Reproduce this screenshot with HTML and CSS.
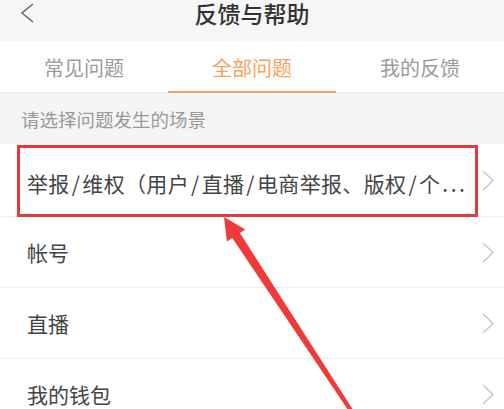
FILE: index.html
```html
<!DOCTYPE html>
<html lang="zh">
<head>
<meta charset="utf-8">
<link rel="stylesheet" href="styles.css">
</head>
<body>
<div class="page">
  <header class="topbar">
    <svg class="back" width="14" height="20" viewBox="0 0 14 20"><path d="M13 1 L2 10 L13 19" fill="none" stroke="#6a6a6a" stroke-width="1.6"/></svg>
    <div class="title">反馈与帮助</div>
  </header>
  <nav class="tabs">
    <div class="tab">常见问题</div>
    <div class="tab active">全部问题</div>
    <div class="tab">我的反馈</div>
  </nav>
  <div class="section">请选择问题发生的场景</div>
  <ul class="list">
    <li class="row"><span class="label long">举报<span class="sl">/</span>维权（用户<span class="sl">/</span>直播<span class="sl">/</span>电商举报、版权<span class="sl">/</span>个<span class="dots">...</span></span><svg class="chev" width="12" height="21" viewBox="0 0 12 21"><path d="M1 1 L11 10.5 L1 20" fill="none" stroke="#c6c6c6" stroke-width="1.5"/></svg></li>
    <li class="row"><span class="label">帐号</span><svg class="chev" width="12" height="21" viewBox="0 0 12 21"><path d="M1 1 L11 10.5 L1 20" fill="none" stroke="#c6c6c6" stroke-width="1.5"/></svg></li>
    <li class="row"><span class="label">直播</span><svg class="chev" width="12" height="21" viewBox="0 0 12 21"><path d="M1 1 L11 10.5 L1 20" fill="none" stroke="#c6c6c6" stroke-width="1.5"/></svg></li>
    <li class="row"><span class="label">我的钱包</span><svg class="chev" width="12" height="21" viewBox="0 0 12 21"><path d="M1 1 L11 10.5 L1 20" fill="none" stroke="#c6c6c6" stroke-width="1.5"/></svg></li>
  </ul>
  <div class="highlight"></div>
  <svg class="arrow" width="504" height="409" viewBox="0 0 504 409">
    <polygon points="224,217 245.3,229.4 239.9,232.9 355.6,413.9 352.2,416.1 232.3,237.9 226.9,241.4" fill="#f03a3a"/>
  </svg>
</div>
</body>
</html>
```

FILE: styles.css
```css
html, body {
  margin: 0;
  padding: 0;
  background: #ffffff;
}
body {
  font-family: "Noto Sans CJK SC", "Noto Sans", sans-serif;
  width: 504px;
  height: 409px;
  overflow: hidden;
}
.page {
  position: relative;
  width: 504px;
  height: 409px;
  overflow: hidden;
}
.topbar {
  height: 41px;
  background: #f6f6f6;
  display: flex;
  justify-content: center;
  align-items: flex-start;
  position: relative;
}
.back {
  position: absolute;
  left: 20px;
  top: 3px;
}
.title {
  font-size: 23px;
  line-height: 24px;
  font-weight: 500;
  color: #333333;
  padding-top: 1px;
}
.tabs {
  display: flex;
  height: 52px;
  background: #ffffff;
  border-bottom: 1px solid #eeeeee;
  box-sizing: border-box;
}
.tab {
  flex: 1;
  display: flex;
  align-items: center;
  justify-content: center;
  font-size: 20px;
  color: #9a9a9a;
  position: relative;
  padding-top: 1px;
}
.tab.active {
  color: #f8a25a;
}
.tab.active::after {
  content: "";
  position: absolute;
  left: 0;
  right: 0;
  bottom: -1px;
  height: 2px;
  background: #f5a060;
}
.section {
  height: 51px;
  background: #f5f5f5;
  display: flex;
  align-items: center;
  padding-left: 21px;
  font-size: 18.5px;
  color: #999999;
}
.list {
  list-style: none;
  margin: 0;
  padding: 0;
}
.row {
  height: 71px;
  box-sizing: border-box;
  border-bottom: 1px solid #eeeeee;
  display: flex;
  align-items: center;
  justify-content: space-between;
  padding: 0 10px 0 27px;
  background: #ffffff;
}
.row:first-child {
  height: 73px;
  padding-top: 6px;
}
.label {
  font-size: 21px;
  color: #444444;
  white-space: nowrap;
}
.label.long {
  letter-spacing: 0.35px;
}
.sl {
  padding: 0 2px;
}
.dots {
  letter-spacing: 2.5px;
  padding-left: 2px;
}
.chev {
  flex: none;
}
.row:first-child .chev {
  margin-top: -6px;
}
.highlight {
  position: absolute;
  left: 17px;
  top: 145px;
  width: 461px;
  height: 72px;
  box-sizing: border-box;
  border: 3.5px solid #e8383c;
}
.arrow {
  position: absolute;
  left: 0;
  top: 0;
}
```
